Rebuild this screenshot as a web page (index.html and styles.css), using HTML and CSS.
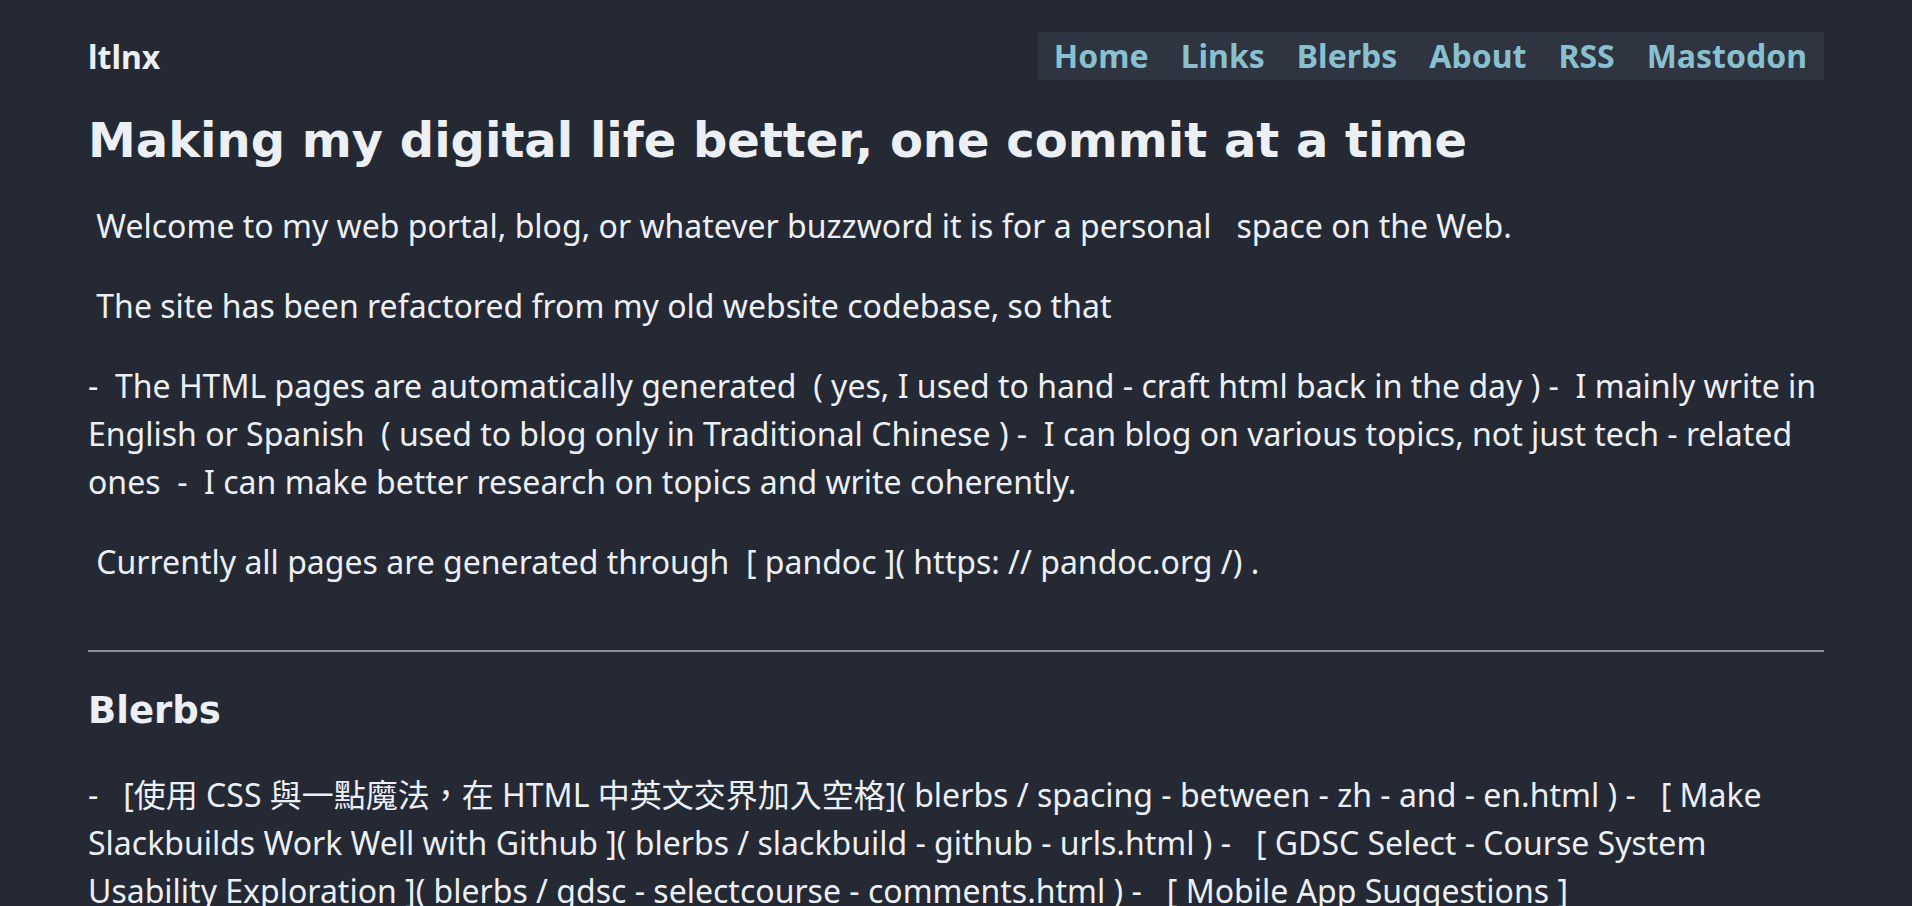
FILE: index.html
```html
<!DOCTYPE html>
<html lang="en">
<head>
<meta charset="utf-8">
<title>ltlnx</title>
<link rel="stylesheet" href="styles.css">
</head>
<body>
<div class="page">
  <header class="site-header">
    <a class="brand" href="#">ltlnx</a>
    <nav class="nav">
      <a href="#">Home</a>
      <a href="#">Links</a>
      <a href="#">Blerbs</a>
      <a href="#">About</a>
      <a href="#">RSS</a>
      <a href="#">Mastodon</a>
    </nav>
  </header>
  <main>
    <h1 class="title">Making my digital life better, one commit at a time</h1>
    <p class="text"> Welcome to my web portal, blog, or whatever buzzword it is for a personal   space on the Web.</p>
    <p class="text"> The site has been refactored from my old website codebase, so that</p>
    <p class="text">-  The HTML pages are automatically generated  ( yes, I used to hand - craft html back in the day ) -  I mainly write in English or Spanish  ( used to blog only in Traditional Chinese ) -  I can blog on various topics, not just tech - related ones  -  I can make better research on topics and write coherently.</p>
    <p class="text"> Currently all pages are generated through  [ pandoc ]( https: // pandoc.org /) .</p>
    <hr class="rule">
    <h2 class="section-title">Blerbs</h2>
    <p class="text">-   [使用 CSS 與一點魔法，在 HTML 中英文交界加入空格]( blerbs / spacing - between - zh - and - en.html ) -   [ Make Slackbuilds Work Well with Github ]( blerbs / slackbuild - github - urls.html ) -   [ GDSC Select - Course System Usability Exploration ]( blerbs / gdsc - selectcourse - comments.html ) -   [ Mobile App Suggestions ]<span class="nowrap">( blerbs / mobile - apps.html )</span></p>
  </main>
</div>
</body>
</html>
```

FILE: styles.css
```css
html, body {
  margin: 0;
  padding: 0;
}
body {
  background: #242933;
  color: #eceff4;
  font-family: "Noto Sans", "Noto Sans CJK TC", sans-serif;
  font-size: 32px;
  line-height: 1.5;
}
.page {
  padding: 32px 88px;
}
.site-header {
  display: flex;
  justify-content: space-between;
  align-items: center;
  height: 48px;
}
.brand {
  color: #eceff4;
  text-decoration: none;
  font-weight: 700;
  font-size: 32px;
  line-height: 48px;
  padding-top: 2px;
}
.nav {
  display: flex;
  gap: 32px;
  background: #2e3440;
  padding: 0 17px;
  height: 48px;
  align-items: center;
}
.nav a {
  color: #88c0d0;
  text-decoration: none;
  font-weight: 700;
  font-size: 32px;
  line-height: 48px;
}
.title {
  font-family: "DejaVu Sans", sans-serif;
  font-size: 48px;
  font-weight: 700;
  line-height: 1.2;
  margin: 32px 0 0;
}
.text {
  white-space: pre-wrap;
  margin: 32px 0;
}
.nowrap {
  white-space: nowrap;
}
.rule {
  border: 0;
  border-top: 2px solid #8a8f99;
  margin: 64px 0 0;
}
.section-title {
  font-family: "DejaVu Sans", sans-serif;
  font-size: 37px;
  font-weight: 700;
  line-height: 1.2;
  margin: 37px 0 38px;
}
```
